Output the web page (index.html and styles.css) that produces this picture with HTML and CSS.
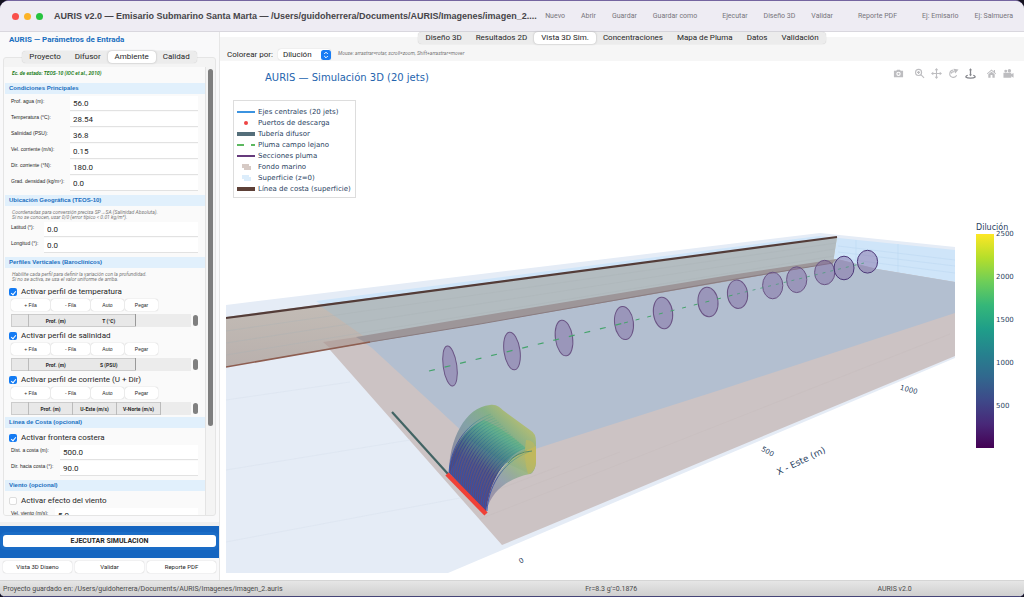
FILE: index.html
```html
<!DOCTYPE html>
<html lang="es">
<head>
<meta charset="utf-8">
<title>AURIS v2.0 — Emisario Submarino Santa Marta</title>
<link rel="stylesheet" href="styles.css">
</head>
<body>
<div class="window">
  <header class="titlebar">
    <div class="lights"><span class="light red"></span><span class="light yellow"></span><span class="light green"></span></div>
    <h1 class="window-title">AURIS v2.0 — Emisario Submarino Santa Marta — /Users/guidoherrera/Documents/AURIS/Imagenes/imagen_2....</h1>
    <nav class="toolbar">
      <div class="tool-group"><button>Nuevo</button><button>Abrir</button><button>Guardar</button><button>Guardar como</button></div>
      <div class="tool-group"><button>Ejecutar</button><button>Diseño 3D</button><button>Validar</button></div>
      <div class="tool-group"><button>Reporte PDF</button></div>
      <div class="tool-group"><button>Ej: Emisario</button><button>Ej: Salmuera</button></div>
    </nav>
  </header>

  <div class="body">
    <aside class="sidebar">
      <h2 class="side-title">AURIS — Parámetros de Entrada</h2>
      <div class="tabs side-tabs"><button>Proyecto</button><button>Difusor</button><button class="active">Ambiente</button><button>Calidad</button></div>
      <div class="panel">
        <form class="form">
          <p class="state">Ec. de estado: TEOS-10 (IOC et al., 2010)</p>
          <h3>Condiciones Principales</h3>
          <div class="fields main-fields">
            <label for="prof">Prof. agua (m):</label><input id="prof" value="56.0">
            <label for="temp">Temperatura (°C):</label><input id="temp" value="28.54">
            <label for="sal">Salinidad (PSU):</label><input id="sal" value="36.8">
            <label for="vel">Vel. corriente (m/s):</label><input id="vel" value="0.15">
            <label for="dir">Dir. corriente (°N):</label><input id="dir" value="180.0">
            <label for="grad">Grad. densidad (kg/m⁴):</label><input id="grad" value="0.0">
          </div>
          <h3>Ubicación Geográfica (TEOS-10)</h3>
          <p class="hint">Coordenadas para conversión precisa SP→SA (Salinidad Absoluta).<br>Si no se conocen, usar 0/0 (error típico &lt; 0.01 kg/m³).</p>
          <div class="fields geo-fields">
            <label for="lat">Latitud (°):</label><input id="lat" value="0.0">
            <label for="lon">Longitud (°):</label><input id="lon" value="0.0">
          </div>
          <h3>Perfiles Verticales (Baroclínicos)</h3>
          <p class="hint">Habilite cada perfil para definir la variación con la profundidad.<br>Si no se activa, se usa el valor uniforme de arriba.</p>
          <label class="check"><input type="checkbox" checked>Activar perfil de temperatura</label>
          <div class="row-buttons"><button type="button">+ Fila</button><button type="button">- Fila</button><button type="button">Auto</button><button type="button">Pegar</button></div>
          <div class="table-box"><table><tr><th class="corner"></th><th class="c-a">Prof. (m)</th><th class="c-b">T (°C)</th></tr></table><span class="thumb"></span></div>
          <label class="check"><input type="checkbox" checked>Activar perfil de salinidad</label>
          <div class="row-buttons"><button type="button">+ Fila</button><button type="button">- Fila</button><button type="button">Auto</button><button type="button">Pegar</button></div>
          <div class="table-box"><table><tr><th class="corner"></th><th class="c-a">Prof. (m)</th><th class="c-b">S (PSU)</th></tr></table><span class="thumb"></span></div>
          <label class="check"><input type="checkbox" checked>Activar perfil de corriente (U + Dir)</label>
          <div class="row-buttons"><button type="button">+ Fila</button><button type="button">- Fila</button><button type="button">Auto</button><button type="button">Pegar</button></div>
          <div class="table-box lined"><table><tr><th class="corner"></th><th class="c-c">Prof. (m)</th><th class="c-c">U-Este (m/s)</th><th class="c-c">V-Norte (m/s)</th></tr></table><span class="thumb"></span></div>
          <h3>Línea de Costa (opcional)</h3>
          <label class="check spaced"><input type="checkbox" checked>Activar frontera costera</label>
          <div class="fields coast-fields">
            <label for="dist">Dist. a costa (m):</label><input id="dist" value="500.0">
            <label for="dirc">Dir. hacia costa (°):</label><input id="dirc" value="90.0">
          </div>
          <h3>Viento (opcional)</h3>
          <label class="check spaced"><input type="checkbox">Activar efecto del viento</label>
          <div class="fields wind-fields">
            <label for="wind">Vel. viento (m/s):</label><input id="wind" value="5.0">
          </div>
        </form>
        <div class="scroll"><span class="scroll-thumb"></span></div>
      </div>
      <div class="run"><button>EJECUTAR SIMULACION</button></div>
      <div class="quick"><button>Vista 3D Diseno</button><button>Validar</button><button>Reporte PDF</button></div>
    </aside>

    <main class="main">
      <div class="tabs main-tabs"><button>Diseño 3D</button><button>Resultados 2D</button><button class="active">Vista 3D Sim.</button><button>Concentraciones</button><button>Mapa de Pluma</button><button>Datos</button><button>Validación</button></div>
      <div class="options">
        <label for="color">Colorear por:</label>
        <span class="select"><select id="color"><option>Dilución</option></select><svg viewBox="0 0 10 10"><rect width="10" height="10" rx="2.5"/><path d="M3.2 4 5 2.2 6.8 4M3.2 6 5 7.8 6.8 6"/></svg></span>
        <em>Mouse: arrastrar=rotar, scroll=zoom, Shift+arrastrar=mover</em>
      </div>
      <section class="plot">
        <svg class="scene" viewBox="226 61 729 512" role="img" aria-label="Simulación 3D">
          <defs>
            <linearGradient id="wall" x1="0" y1="0" x2="0" y2="1"><stop offset="0" stop-color="#ccc8be"/><stop offset="1" stop-color="#b9b0ad"/></linearGradient>
            <linearGradient id="plume" gradientUnits="userSpaceOnUse" x1="466" y1="494" x2="512" y2="425"><stop offset="0" stop-color="#51366f"/><stop offset=".35" stop-color="#4b4a78"/><stop offset=".58" stop-color="#447a84"/><stop offset=".8" stop-color="#5bab8e"/><stop offset="1" stop-color="#7fbd78"/></linearGradient>
            <linearGradient id="side" gradientUnits="userSpaceOnUse" x1="490" y1="505" x2="532" y2="455"><stop offset="0" stop-color="#6f5f8c" stop-opacity=".5"/><stop offset=".4" stop-color="#7d93a4" stop-opacity=".7"/><stop offset=".7" stop-color="#96b585" stop-opacity=".9"/><stop offset="1" stop-color="#bfb75f"/></linearGradient>
            <linearGradient id="cap" gradientUnits="userSpaceOnUse" x1="450" y1="465" x2="504" y2="407"><stop offset="0" stop-color="#766f93" stop-opacity=".75"/><stop offset=".5" stop-color="#7b9ba0" stop-opacity=".85"/><stop offset=".8" stop-color="#86b088"/><stop offset="1" stop-color="#aebb76"/></linearGradient>
            <linearGradient id="jetc" x1="0" y1="1" x2="1" y2="0"><stop offset="0" stop-color="#2559c0"/><stop offset=".4" stop-color="#343e91"/><stop offset=".7" stop-color="#2f7f92" stop-opacity=".7"/><stop offset="1" stop-color="#3f9f83" stop-opacity=".25"/></linearGradient>
            <path id="jet" d="M449 473C450 451 463 424 491 414"/>
          </defs>
          <path fill="#e5ecf6" d="M226 305 820 233 955 247V358L448 573H226Z"/>
          <path fill="#cfe5f9" d="M316 301 819 236 955 250V284L833 266V240L325 307Z"/>
          <path fill="none" stroke="#bdd9f2" stroke-width=".6" d="M838 246 955 260M838 252 955 266M838 258 955 273M856 240V265M898 244V272"/>
          <path fill="#ccc3c4" d="M323 342 837 259 877 269 955 282V356L502 545Z"/>
          <path fill="#b3bfd0" d="M355 336 837 259 877 269 955 282V313L720 390 560 441 495 462 437 408 372 348Z"/>
          <path fill="none" stroke="#c2b8ba" stroke-width=".5" opacity=".6" d="M480 519 950 334M470 500 560 466M520 490 620 452"/>
          <path fill="none" stroke="#dae2ef" stroke-width=".6" d="M226 400 350 382M226 470 410 440M226 542 460 498"/>
          <path fill="url(#wall)" d="M226 317 837 237 833 263 226 367Z"/>
          <path fill="#b3bcc0" d="M319 305 837 237 833 263 372 342Z"/>
          <path fill="#b5a5a1" d="M323 342 357 337 368 343 331 349Z"/>
          <path fill="#9d9699" d="M356 337 480 316 730 275 837 259 833 263 480 324 366 343Z"/>
          <path fill="none" stroke="#a9b2b4" stroke-width=".5" opacity=".7" d="M226 331 836 243M226 343 835 249M226 355 834 256"/>
          <path fill="none" stroke="#8d5d50" stroke-width="1.6" d="M226 367 370 342"/>
          <path fill="none" stroke="#8a7c80" stroke-width="1" d="M370 342 480 324 730 280 833 263"/>
          <path fill="none" stroke="#533c38" stroke-width="2.2" d="M226 318 837 237"/>
          <path fill="none" stroke="#426464" stroke-width="2.2" d="M392 412 448 474"/>
          <g fill="#7d64a0" fill-opacity=".45" stroke="#6a5484" stroke-width="1">
            <ellipse cx="450" cy="366" rx="6.8" ry="20.2" transform="rotate(-8 450 366)"/>
            <ellipse cx="512" cy="351" rx="8" ry="19" transform="rotate(-8 512 351)"/>
            <ellipse cx="564" cy="338" rx="8.6" ry="18" transform="rotate(-8 564 338)"/>
            <ellipse cx="624" cy="323" rx="9.4" ry="16.6" transform="rotate(-7 624 323)"/>
            <ellipse cx="663" cy="313" rx="9.6" ry="15.8" transform="rotate(-7 663 313)"/>
            <ellipse cx="708" cy="302" rx="10" ry="14.8" transform="rotate(-6 708 302)"/>
            <ellipse cx="737.5" cy="294.3" rx="10.1" ry="14.2" transform="rotate(-6 737 294)"/>
            <ellipse cx="772.7" cy="285.5" rx="10.1" ry="13.3"/>
            <ellipse cx="796.7" cy="279.7" rx="10.1" ry="12.9"/>
            <ellipse cx="824.7" cy="272.5" rx="10.1" ry="12.2"/>
            <ellipse cx="844" cy="268" rx="10" ry="11.8" stroke="#4c3878"/>
            <ellipse cx="867.5" cy="261.7" rx="10.1" ry="11.4" stroke="#4c3878"/>
          </g>
          <path fill="none" stroke="#45a36c" stroke-width="1.2" stroke-dasharray="6 10" d="M429 371 624 323"/>
          <path fill="none" stroke="#45a36c" stroke-width="1" stroke-dasharray="4 8" d="M624 323 737 294"/>
          <path fill="none" stroke="#4b9c7c" stroke-width=".8" stroke-dasharray="3 5" d="M737 294 864 263"/>
          <path fill="url(#cap)" d="M449 473C449 440 465 407 490 405 497 404 500 408 504 411L530 430Q536 433 536 442V462Q535 472 530 474L500 460 470 440Z"/>
          <path fill="url(#plume)" opacity=".9" d="M449 473C451 449 464 428 484 420Q500 426 526 448C508 455 490 476 486 513Z"/>
          <path fill="url(#side)" d="M486 513C489 480 506 455 530 449L536 446V462Q535 472 530 474C508 478 490 492 486 513Z"/>
          <path fill="#c2b95c" opacity=".6" d="M526 440Q536 440 536 452V462Q535 472 528 474 523 458 526 440"/>
          <g fill="none" stroke="url(#jetc)" stroke-width=".8">
            <use href="#jet"/><use href="#jet" x="2" y="2"/><use href="#jet" x="4" y="4"/><use href="#jet" x="6" y="6"/><use href="#jet" x="8" y="8"/><use href="#jet" x="10" y="10"/><use href="#jet" x="12" y="12"/><use href="#jet" x="14" y="14"/><use href="#jet" x="16" y="16"/><use href="#jet" x="18" y="18"/><use href="#jet" x="20" y="20"/><use href="#jet" x="22" y="22"/><use href="#jet" x="24" y="24"/><use href="#jet" x="26" y="26"/><use href="#jet" x="28" y="28"/><use href="#jet" x="30" y="30"/><use href="#jet" x="32" y="32"/><use href="#jet" x="34" y="34"/><use href="#jet" x="36" y="36"/><use href="#jet" x="38" y="38"/>
          </g>
          <path fill="none" stroke="#3f7f70" stroke-width=".8" d="M508 463Q516 452 532 451"/>
          <path fill="none" stroke="#ef4037" stroke-width="4.6" d="M447 474 486 514"/>
          <g class="axis">
            <text x="521" y="563" transform="rotate(-30 521 560)">0</text>
            <text x="768" y="454" transform="rotate(28 768 451)">500</text>
            <text x="909" y="392" transform="rotate(15 909 389)">1000</text>
            <text class="axis-title" x="801" y="464" transform="rotate(-26 801 461)">X - Este (m)</text>
          </g>
        </svg>
        <div class="colorbar">
          <span class="bar-title">Dilución</span>
          <div class="bar"><span class="ramp"></span><ol><li>2500</li><li>2000</li><li>1500</li><li>1000</li><li>500</li></ol></div>
        </div>
        <h2 class="plot-title">AURIS — Simulación 3D (20 jets)</h2>
        <ul class="legend">
          <li><svg viewBox="0 0 18 8"><path stroke="#3b93e0" stroke-width="2" d="M0 4H18"/></svg>Ejes centrales (20 jets)</li>
          <li><svg viewBox="0 0 18 8"><circle cx="9" cy="4" r="2" fill="#ee4444"/></svg>Puertos de descarga</li>
          <li><svg viewBox="0 0 18 8"><path stroke="#546e7a" stroke-width="4" d="M0 4H18"/></svg>Tubería difusor</li>
          <li><svg viewBox="0 0 18 8"><path stroke="#5cb860" stroke-width="2" stroke-dasharray="7 7" d="M0 4H18"/></svg>Pluma campo lejano</li>
          <li><svg viewBox="0 0 18 8"><path stroke="#663a7c" stroke-width="2" d="M0 4H18"/></svg>Secciones pluma</li>
          <li><svg viewBox="0 0 18 8"><path fill="#d6cac5" d="M5 1H12V3H14V7H7V5H5Z"/></svg>Fondo marino</li>
          <li><svg viewBox="0 0 18 8"><path fill="#dcedfb" d="M5 1H12V3H14V7H7V5H5Z"/></svg>Superficie (z=0)</li>
          <li><svg viewBox="0 0 18 8"><path stroke="#5d4037" stroke-width="4" d="M0 4H18"/></svg>Línea de costa (superficie)</li>
        </ul>
        <div class="modebar">
          <div><button aria-label="Descargar"><svg viewBox="0 0 12 12"><path fill-rule="evenodd" d="M1 3H3.5L4.5 1.8H7.5L8.5 3H11V10H1ZM6 4A2.4 2.4 0 1 0 6 8.8 2.4 2.4 0 1 0 6 4M6 5.2A1.2 1.2 0 1 1 6 7.6 1.2 1.2 0 1 1 6 5.2"/></svg></button></div>
          <div>
            <button aria-label="Zoom"><svg viewBox="0 0 12 12"><path class="line" d="M5 1.5A3.3 3.3 0 1 0 5 8.1 3.3 3.3 0 1 0 5 1.5M7.5 7.3 11 10.8M3.3 4.8H6.7M5 3.2V6.5"/></svg></button>
            <button aria-label="Mover"><svg viewBox="0 0 12 12"><path class="line" d="M1.5 6H10.5M6 1.5V10.5"/><path d="M0 6 2.5 4V8ZM12 6 9.5 4V8ZM6 0 4 2.5H8ZM6 12 4 9.5H8Z"/></svg></button>
            <button aria-label="Órbita"><svg viewBox="0 0 12 12"><path class="line" d="M6 2.2A4 4 0 1 0 9.5 8M3.5 6Q4 4 7 4"/><path d="M6 .8 11.5 1.5 8 6Z"/></svg></button>
            <button class="on" aria-label="Plato giratorio"><svg viewBox="0 0 12 12"><path d="M5.3 2H6.7V8H5.3ZM4.3 2.5 6 .3 7.7 2.5ZM4.3 7H7.7L6 9Z"/><path class="line" d="M3 8C-1 9.5 1 11 6 11S13 9.5 9 8"/></svg></button>
          </div>
          <div>
            <button aria-label="Inicio"><svg viewBox="0 0 12 12"><path d="M1 6 6 1.5 8.5 3.7V2.2H9.8V5L11 6 10.5 6.7 6 3 1.5 6.7ZM2.5 6.8 6 4 9.5 6.8V10.5H7V7.5H5V10.5H2.5Z"/></svg></button>
            <button aria-label="Cámara"><svg viewBox="0 0 12 12"><path d="M.5 5.3H9V6.8L11.5 5.5V10.5L9 9V10.5H.5ZM3 1.8A1.6 1.6 0 1 1 3 5 1.6 1.6 0 1 1 3 1.8M7 1.2A1.9 1.9 0 1 1 7 5 1.9 1.9 0 1 1 7 1.2"/></svg></button>
          </div>
        </div>
      </section>
    </main>
  </div>

  <footer class="status"><span>Proyecto guardado en: /Users/guidoherrera/Documents/AURIS/Imagenes/imagen_2.auris</span><span>Fr=8.3 g'=0.1876</span><span>AURIS v2.0</span></footer>
</div>
</body>
</html>
```

FILE: styles.css
```css
* { box-sizing: border-box; }
body { margin: 0; background: #14121f; font: 8px/10px Roboto, "Liberation Sans", sans-serif; color: #262626; }
h1, h2, h3, p, ul, ol { margin: 0; padding: 0; list-style: none; }
button, input, select { font: inherit; color: inherit; border: 0; padding: 0; margin: 0; background: none; }

.window { min-height: 100vh; display: flex; flex-direction: column; background: #f9f9fa; border-radius: 9px 9px 5px 5px; border-top: 1px solid #7565a0; border-bottom: 1px solid #454477; overflow: hidden; }
.titlebar { height: 31px; flex: none; display: flex; align-items: center; justify-content: space-between; padding: 0 11px 0 12px; background: #eeecf3; border-bottom: 1px solid #d9d7de; white-space: nowrap; }
.lights { display: flex; gap: 5px; margin-right: 11px; }
.light { width: 7px; height: 7px; border-radius: 50%; }
.red { background: #f9504b; }
.yellow { background: #fcb327; }
.green { background: #26c33f; }
.window-title { font: 700 9px/14px "Liberation Sans", sans-serif; color: #464449; }
.toolbar { display: flex; flex: 1; justify-content: flex-end; gap: 25px; font-size: 7px; color: #77757b; }
.tool-group { display: flex; gap: 16px; }

.body { flex: 1; display: flex; }
.sidebar { width: 220px; flex: none; display: flex; flex-direction: column; border-right: 1px solid #e6e6e6; }
.side-title { padding: 3px 9px 6px; font-size: 8px; line-height: 10px; color: #1a6fc0; }
.tabs { display: flex; z-index: 1; align-self: center; background: #ececec; border-radius: 4px; box-shadow: 0 0 1px #bbb; line-height: 12px; }
.tabs button { padding: 0 7px; border-radius: 4px; }
.tabs button.active { background: #fff; box-shadow: 0 0 2px #aaa; }
.side-tabs { margin-bottom: -6px; }
.panel { margin: 0 3px; height: 459px; display: flex; background: #f4f4f4; border: 1px solid #e5e5e5; border-radius: 3px; padding-top: 9px; overflow: hidden; }
.form { flex: 1; min-width: 0; padding-left: 1px; background: #fafafa; border-right: 1px solid #e4e4e4; font-size: 5px; }
.form p { padding: 0 7px; font-style: italic; white-space: nowrap; }
.form .state { font-size: 5px; line-height: 6px; padding-top: 3px; margin-bottom: 7px; color: #1c7d20; font-weight: 700; }
.form h3 { height: 11px; padding: 0 4px; background: #e1f0fc; font: 700 6px/11px "Liberation Sans", sans-serif; color: #1a6fc0; }
.form .hint { font-size: 5px; line-height: 5px; padding-top: 4px; color: #777; }
.fields { display: grid; row-gap: 2px; padding: 2px 7px 5px 6px; }
.fields label { font: 5px/10px "Liberation Sans", sans-serif; white-space: nowrap; }
.fields input { min-width: 0; width: 100%; height: 14px; padding: 0 3px; background: #fff; font-size: 8px; box-shadow: 0 1px 0 #e2e2e2; }
.main-fields { grid-template-columns: 59px 1fr; }
.geo-fields { grid-template-columns: 33px 1fr; }
.coast-fields { grid-template-columns: 49px 1fr; padding-top: 0; }
.wind-fields { grid-template-columns: 44px 1fr; padding-top: 0; }
.check { display: flex; align-items: center; gap: 4px; height: 12px; padding-left: 4px; font-size: 8px; }
.hint + .check { margin-top: 4px; }
.check.spaced { height: 17px; padding-top: 3px; }
.check input { appearance: none; width: 8px; height: 8px; border-radius: 2px; background: #fff; border: 1px solid #ddd; }
.check input:checked { border: 0; background: #147bf3; display: grid; place-items: center; }
.check input:checked::after { content: ""; width: 2px; height: 4px; border: solid #fff; border-width: 0 1px 1px 0; rotate: 40deg; }
.row-buttons { display: grid; grid-template-columns: 39px 39px 33px 33px; gap: 1px; padding: 1px 6px 3px; font-family: "Liberation Sans", sans-serif; }
.row-buttons button, .quick button { height: 12px; line-height: 10px; border-radius: 3px; background: #fff; box-shadow: 0 0 1px #aaa; }
.table-box { display: flex; align-items: center; justify-content: space-between; height: 13px; margin: 0 7px 3px 6px; background: linear-gradient(90deg, #ececec 180px, #fafafa 180px); }
.table-box table { border-collapse: collapse; height: 13px; background: #e8e8e8; border: 1px solid #ccc; border-right-color: #999; }
.table-box th { padding: 0; font-size: 5px; line-height: 10px; }
.corner { width: 17px; border-right: 1px solid #bbb; }
.c-a { width: 54px; }
.c-b { width: 53px; }
.c-c { width: 44px; }
.lined { margin-bottom: 2px; }
.lined th { border-right: 1px solid #bbb; }
.thumb { width: 5px; height: 11px; border-radius: 3px; background: #808080; }
.scroll { width: 9px; padding: 2px; }
.scroll-thumb { display: block; height: 357px; width: 5px; border-radius: 3px; background: #7e7e7e; }
.run { margin-top: 6px; border-top: 4px solid #f0f0f0; background: #1565c0; }
.run button { display: block; width: calc(100% - 6px); height: 12px; margin: 9px 3px 11px; border-radius: 3px; background: #fff; font-weight: 700; font-size: 7px; box-shadow: 0 0 0 3px #1a6cc6; }
.quick { display: grid; grid-template-columns: repeat(3, 1fr); gap: 3px; padding: 3px; font-size: 6px; }

.main { flex: 1; min-width: 0; display: flex; flex-direction: column; background: #fff; }
.options { display: flex; align-items: center; gap: 5px; height: 24px; margin-top: -7px; padding: 11px 7px 0; background: #f6f6f6; }
.select { display: flex; align-items: center; background: #fff; border-radius: 3px; box-shadow: 0 0 1px #bbb; }
.select select { appearance: none; width: 43px; height: 11px; padding-left: 5px; font-size: 8px; }
.select svg { width: 10px; height: 10px; }
.select rect { fill: #187cf4; }
.select path { fill: none; stroke: #fff; }
.options em { margin: -4px 0 0 2px; font-size: 5px; color: #777; }
.plot { position: relative; flex: 1; display: flex; align-items: flex-start; padding-left: 6px; font-family: "DejaVu Sans", sans-serif; color: #2a3f5f; }
.scene { flex: 1; min-width: 0; display: block; }
.axis { font-size: 7px; fill: #2a3f5f; text-anchor: middle; }
.axis-title { font-size: 9px; }
.colorbar { width: 69px; padding: 160px 0 0 21px; font-size: 7px; }
.bar-title { display: block; line-height: 13px; font-size: 8px; }
.bar { display: flex; gap: 2px; height: 214px; }
.ramp { width: 18px; background: linear-gradient(#fde725, #b5de2b, #6ece58, #35b779, #1f9e89, #26828e, #31688e, #3e4989, #482878, #440154); }
.bar li { height: 43px; line-height: 1px; }
.plot-title { position: absolute; left: 45px; top: 10px; font-size: 10px; line-height: 14px; font-weight: 400; color: #2464ae; }
.legend { position: absolute; left: 13px; top: 39px; padding: 5px 4px 3px 3px; border: 1px solid #ddd; background: #fff; font-size: 7px; }
.legend li { display: flex; align-items: center; gap: 3px; height: 11px; white-space: nowrap; }
.legend svg { width: 18px; height: 8px; }
.modebar { position: absolute; right: 10px; top: 7px; display: flex; gap: 10px; }
.modebar div { display: flex; gap: 6px; }
.modebar svg { display: block; width: 11px; height: 11px; fill: #bdbdc0; }
.modebar .line { fill: none; stroke: #bdbdc0; stroke-width: 1.2; }
.modebar .on svg { fill: #85868c; }
.modebar .on .line { stroke: #85868c; }

.status { height: 16px; flex: none; display: grid; grid-template-columns: 57.2% 28.7% 1fr; align-items: center; padding: 0 3px; background: linear-gradient(#e6e6e6, #cfcfcf); border-top: 1px solid #d5d5d5; font-size: 7px; color: #4a4a4a; }
```
